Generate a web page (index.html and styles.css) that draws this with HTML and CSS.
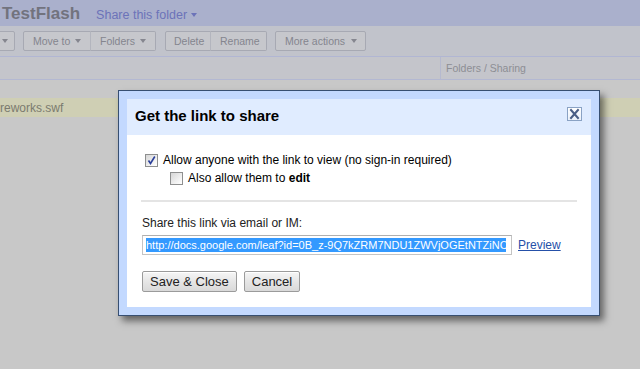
FILE: index.html
```html
<!DOCTYPE html>
<html>
<head>
<meta charset="utf-8">
<title>Get the link to share</title>
<link rel="stylesheet" href="styles.css">
</head>
<body>
<div class="app">
  <div class="topbar">
    <span class="doc-title">TestFlash</span>
    <span class="share-folder">Share this folder <span class="caret blue"></span></span>
  </div>
  <div class="toolbar">
    <div class="tbtn tbtn-partial"><span class="caret"></span></div>
    <div class="tgroup">
      <div class="tbtn w-move">Move to <span class="caret"></span></div>
      <div class="tbtn w-folders joined">Folders <span class="caret"></span></div>
    </div>
    <div class="tgroup">
      <div class="tbtn w-delete">Delete</div>
      <div class="tbtn w-rename joined">Rename</div>
    </div>
    <div class="tgroup">
      <div class="tbtn w-more">More actions <span class="caret"></span></div>
    </div>
  </div>
  <div class="colhead">
    <div class="col-name"></div>
    <div class="col-folders">Folders / Sharing</div>
  </div>
  <div class="list">
    <div class="file-row">reworks.swf</div>
  </div>
</div>

<div class="dialog">
  <div class="dlg-head">
    <div class="dlg-title">Get the link to share</div>
    <div class="dlg-close">
      <svg width="13" height="12" viewBox="0 0 13 12"><path d="M3 2 L10 10 M10 2 L3 10" stroke="#4a5e86" stroke-width="2" stroke-linecap="square"/></svg>
    </div>
  </div>
  <div class="dlg-body">
    <div class="opt-row">
      <span class="cb cb-checked"><svg width="11" height="11" viewBox="0 0 11 11"><path d="M2.5 5.5 L4.5 8.5 L8.8 1.5" fill="none" stroke="#2a3f9a" stroke-width="1.6"/></svg></span>
      <span>Allow anyone with the link to view (no sign-in required)</span>
    </div>
    <div class="opt-row sub">
      <span class="cb"></span>
      <span>Also allow them to <b>edit</b></span>
    </div>
    <div class="sep"></div>
    <div class="label">Share this link via email or IM:</div>
    <div class="link-row">
      <div class="link-field"><div class="link-clip"><span class="sel">http://docs.google.com/leaf?id=0B_z-9Q7kZRM7NDU1ZWVjOGEtNTZiNC00</span></div></div>
      <a class="preview" href="#">Preview</a>
    </div>
    <div class="actions">
      <button class="btn">Save &amp; Close</button>
      <button class="btn">Cancel</button>
    </div>
  </div>
</div>
</body>
</html>
```

FILE: styles.css
```css
html, body {
  margin: 0;
  padding: 0;
}
body {
  width: 640px;
  height: 369px;
  overflow: hidden;
  background: #c8c8c8;
  font-family: "Liberation Sans", Arial, sans-serif;
  position: relative;
}
.app {
  display: flex;
  flex-direction: column;
  height: 369px;
}
.topbar {
  height: 25px;
  padding-top: 1px;
  background: #aab0cc;
  display: flex;
  align-items: baseline;
  padding-left: 2px;
}
.doc-title {
  font-size: 17px;
  font-weight: bold;
  color: #72737e;
  line-height: 25px;
}
.share-folder {
  margin-left: 16px;
  font-size: 12.5px;
  color: #6c73b9;
  display: inline-flex;
  align-items: center;
}
.caret {
  display: inline-block;
  width: 0;
  height: 0;
  border-left: 3.5px solid transparent;
  border-right: 3.5px solid transparent;
  border-top: 4px solid #85868f;
  margin-left: 5px;
  vertical-align: middle;
}
.caret.blue {
  border-top-color: #6c73b9;
  margin-left: 4px;
}
.toolbar {
  height: 25px;
  padding-top: 5px;
  background: #c1c3cb;
  border-bottom: 1px solid #b1b6d3;
  display: flex;
  align-items: flex-start;
}
.tgroup {
  display: flex;
  margin-left: 8px;
}
.tgroup + .tgroup {
  margin-left: 9px;
}
.tgroup:last-child {
  margin-left: 8px;
}
.tbtn {
  box-sizing: border-box;
  height: 20px;
  background: #c6c7cc;
  border: 1px solid #a7a9b3;
  border-radius: 2px;
  font-size: 10.5px;
  color: #84858e;
  display: flex;
  align-items: center;
  padding-left: 8px;
}
.tbtn.joined {
  border-left: 1px solid #b3b5be;
  border-top-left-radius: 0;
  border-bottom-left-radius: 0;
  margin-left: -1px;
}
.tbtn-partial {
  width: 22px;
  margin-left: -7px;
  padding-left: 3px;
}
.w-move { width: 68px; padding-left: 9px; border-top-right-radius: 0; border-bottom-right-radius: 0; }
.w-folders { width: 66px; padding-left: 9px; }
.w-delete { width: 46px; border-top-right-radius: 0; border-bottom-right-radius: 0; }
.w-rename { width: 57px; padding-left: 9px; }
.w-more { width: 91px; padding-left: 9px; }
.w-more .caret { margin-left: 6px; }
.colhead {
  height: 22px;
  background: #c4c5cb;
  border-bottom: 1px solid #b3b8d2;
  display: flex;
}
.col-name {
  width: 440px;
  border-right: 1px solid #b5b9cf;
}
.col-folders {
  padding-left: 5px;
  font-size: 10.5px;
  color: #8d8e94;
  line-height: 22px;
}
.list {
  flex: 1;
  background: #c8c8c8;
  padding-top: 18px;
}
.file-row {
  height: 19px;
  line-height: 20px;
  background: #cfcfb4;
  font-size: 12px;
  color: #7b7b6f;
  padding-left: 0;
}

/* Dialog overlay */
.dialog {
  position: absolute;
  left: 118px;
  top: 90px;
  width: 464px;
  padding: 8px;
  background: #c3d9ff;
  border: 1px solid #374f72;
  box-shadow: 4px 5px 7px rgba(0, 0, 0, 0.5);
}
.dlg-head {
  height: 36px;
  background: #e0ecff;
  display: flex;
  justify-content: space-between;
  align-items: flex-start;
  padding: 0 9px 0 8px;
}
.dlg-title {
  font-size: 15px;
  font-weight: bold;
  color: #000;
  line-height: 34px;
}
.dlg-close {
  margin-top: 8px;
  box-sizing: border-box;
  width: 15px;
  height: 14px;
  border: 1px solid #8aa2c4;
  background: linear-gradient(#ffffff, #eaf0fa);
  display: flex;
  align-items: center;
  justify-content: center;
}
.dlg-close svg { display: block; }
.dlg-body {
  height: 172px;
  box-sizing: border-box;
  background: #fff;
  padding: 16px 14px 0 15px;
  font-size: 12px;
  color: #000;
}
.opt-row {
  display: flex;
  align-items: center;
  height: 18px;
  line-height: 18px;
}
.cb {
  box-sizing: border-box;
  width: 13px;
  height: 13px;
  margin-left: 3px;
  margin-right: 5px;
  border: 1px solid #8e8f8f;
  background: linear-gradient(135deg, #d6d6d6, #f4f4f4 70%, #ffffff);
  display: flex;
  align-items: center;
  justify-content: center;
}
.cb svg { display: block; }
.opt-row.sub .cb {
  margin-left: 28px;
}
.sep {
  height: 2px;
  background: #e4e4e4;
  margin: 13px 0 0 -1px;
}
.label {
  margin-top: 12px;
  line-height: 18px;
  color: #222;
}
.link-row {
  margin-top: 3px;
  display: flex;
  align-items: center;
}
.link-field {
  box-sizing: border-box;
  width: 370px;
  height: 20px;
  border: 1px solid #c4c4c4;
  border-top-color: #b0b0b0;
  padding: 0 5px 0 3px;
  background: #fff;
}
.link-clip {
  overflow: hidden;
  white-space: nowrap;
  line-height: 18px;
  font-size: 11px;
}
.sel {
  background: #3399ff;
  color: #fff;
  padding: 1px 0;
}
.preview {
  margin-left: 6px;
  color: #2550a8;
  text-decoration: underline;
  font-size: 12px;
}
.actions {
  margin-top: 16px;
  display: flex;
  gap: 7px;
}
.btn {
  box-sizing: border-box;
  height: 21px;
  padding: 0 7px;
  margin: 0;
  font-family: "Liberation Sans", Arial, sans-serif;
  font-size: 13px;
  color: #222;
  border: 1px solid #9b9b9b;
  border-radius: 2px;
  background: linear-gradient(#f6f6f6, #e6e6e6 50%, #d9d9d9);
  box-shadow: inset 0 1px 0 #ffffff;
}
```
